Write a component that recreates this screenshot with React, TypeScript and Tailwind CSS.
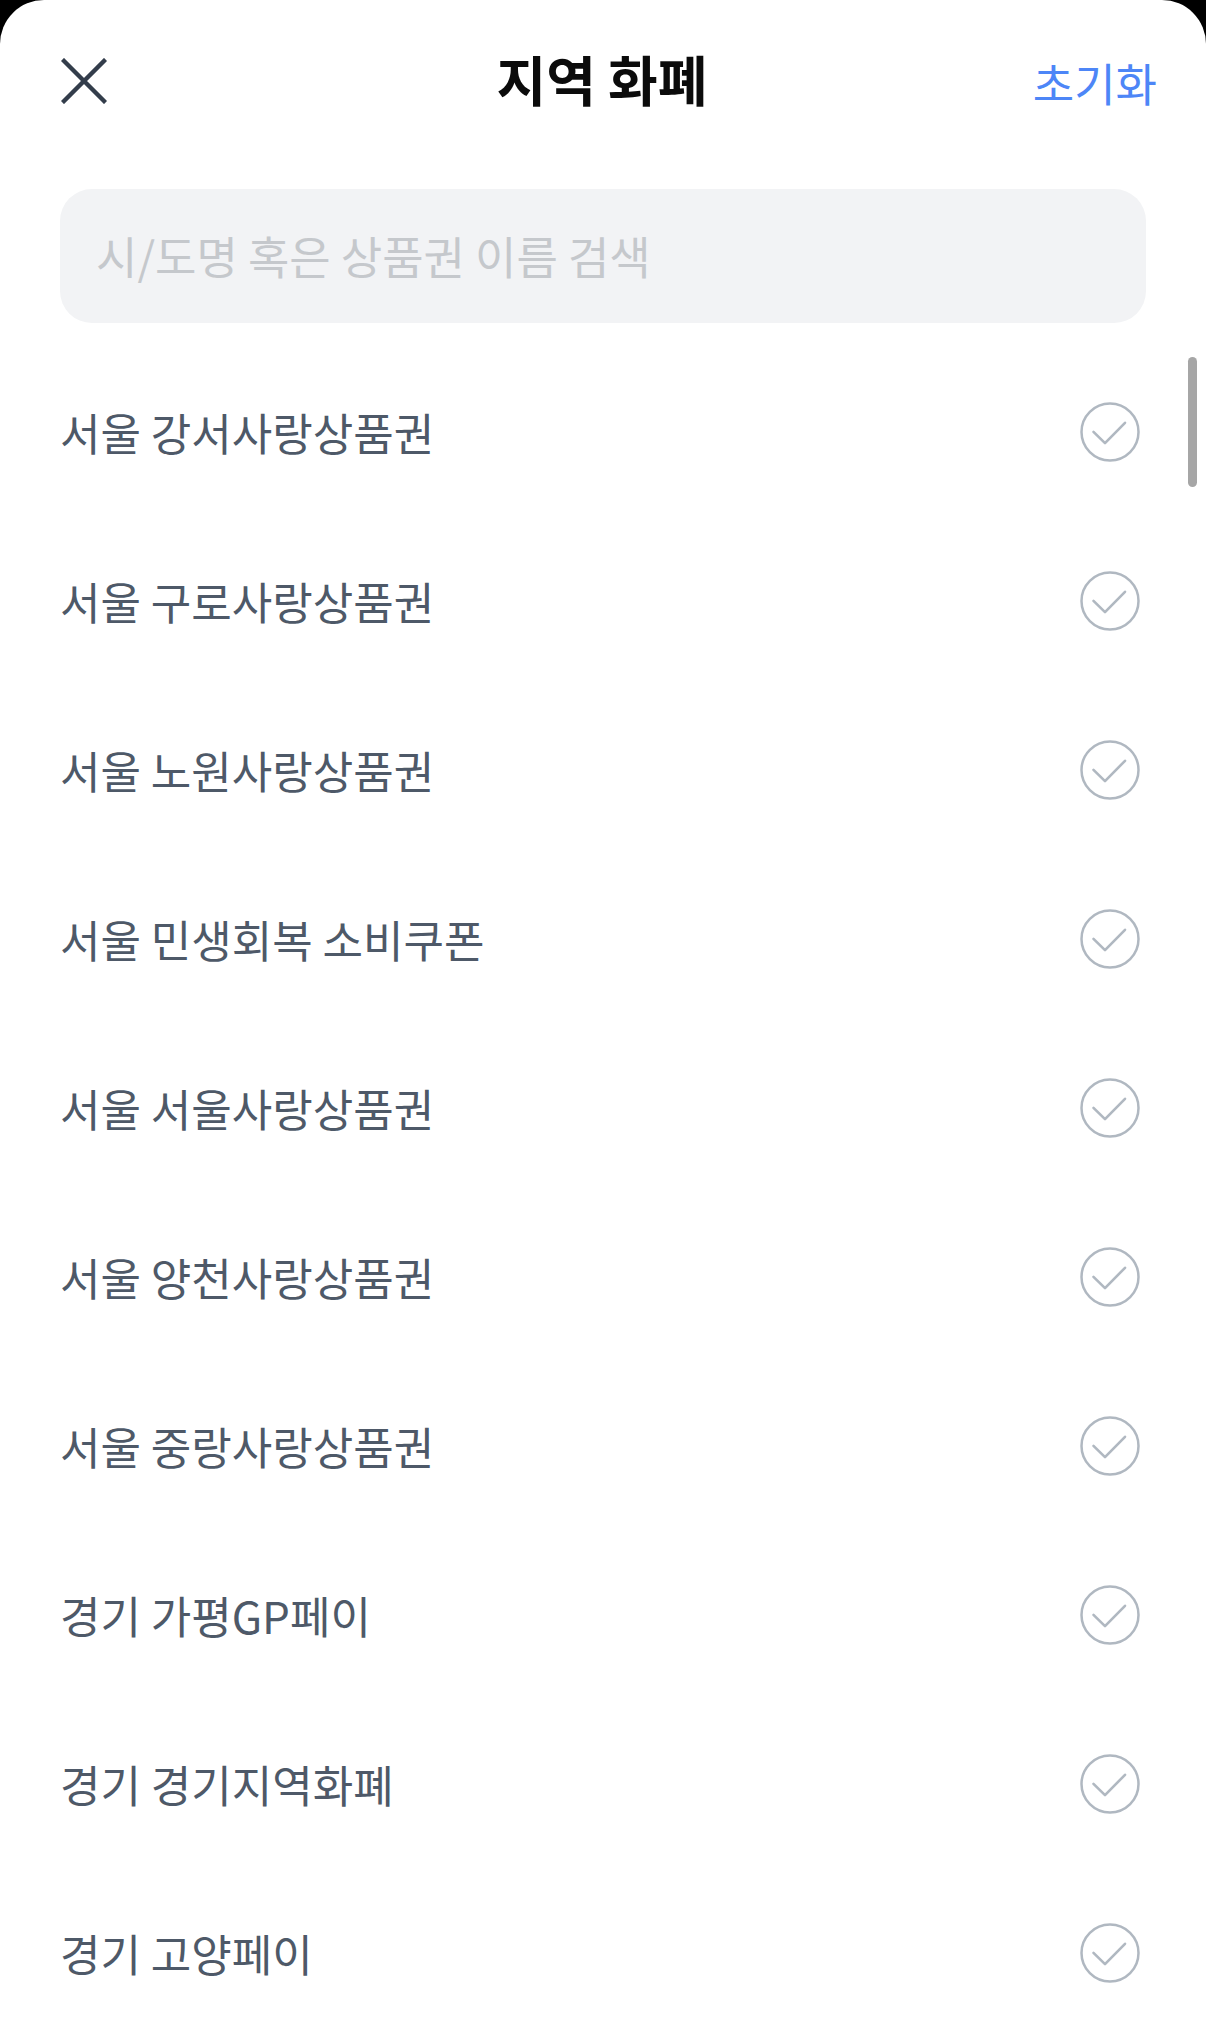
import { useState } from "react";

const regions = [
  "서울 강서사랑상품권",
  "서울 구로사랑상품권",
  "서울 노원사랑상품권",
  "서울 민생회복 소비쿠폰",
  "서울 서울사랑상품권",
  "서울 양천사랑상품권",
  "서울 중랑사랑상품권",
  "경기 가평GP페이",
  "경기 경기지역화폐",
  "경기 고양페이",
];

const CheckCircle = ({ on }: { on: boolean }) => (
  <svg width="60" height="60" viewBox="0 0 60 60" fill="none">
    <circle cx="30" cy="30" r="28.5" stroke={on ? "#3182f6" : "#b0b8c1"} strokeWidth="2.5" fill={on ? "#3182f6" : "none"} />
    <path d="M13.5 29.8L25 41.2L45 20.8" stroke={on ? "#ffffff" : "#b0b8c1"} strokeWidth="2.6" strokeLinecap="round" strokeLinejoin="round" />
  </svg>
);

const App = () => {
  const [query, setQuery] = useState("");
  const [selected, setSelected] = useState<string[]>([]);

  const toggle = (name: string) =>
    setSelected((s) => (s.includes(name) ? s.filter((n) => n !== name) : [...s, name]));

  const list = regions.filter((r) => r.includes(query.trim()));

  return (
    <div className="min-h-screen bg-black font-['Noto_Sans_CJK_KR','Noto_Sans',sans-serif]">
      <div className="relative min-h-screen bg-white rounded-t-[44px]">
        {/* Header */}
        <div className="h-[164px] grid grid-cols-[1fr_auto_1fr] items-center pl-[61px] pr-[49px]">
          <button className="w-[46px] h-[46px] flex items-center justify-start -mt-[2px]" aria-label="닫기">
            <svg width="46" height="46" viewBox="0 0 46 46" fill="none">
              <path d="M3 3L43 43M43 3L3 43" stroke="#333d4b" strokeWidth="4.4" strokeLinecap="square" />
            </svg>
          </button>
          <h1 className="text-[54px] leading-none font-bold text-[#0b0b0b] -mt-[6px] mr-[14px]">지역 화폐</h1>
          <button onClick={() => { setSelected([]); setQuery(""); }} className="justify-self-end text-[45px] leading-none text-[#4d86f7]">
            초기화
          </button>
        </div>

        {/* Search */}
        <div className="mt-[25px] mx-[60px] h-[134px] rounded-[32px] bg-[#f2f3f5] flex items-center px-[36px]">
          <input
            value={query}
            onChange={(e) => setQuery(e.target.value)}
            placeholder="시/도명 혹은 상품권 이름 검색"
            className="w-full bg-transparent outline-none text-[45px] text-[#333d4b] placeholder:text-[#c5c8cc]"
          />
        </div>

        {/* List */}
        <ul className="mt-[24px]">
          {list.map((name) => (
            <li
              key={name}
              onClick={() => toggle(name)}
              className="h-[169px] flex items-center justify-between pl-[60px] pr-[66px] cursor-pointer"
            >
              <span className="text-[44px] text-[#4e5968] leading-none">{name}</span>
              <CheckCircle on={selected.includes(name)} />
            </li>
          ))}
        </ul>

        {/* scroll indicator */}
        <div className="absolute top-[357px] right-[9px] w-[9px] h-[130px] rounded-full bg-[#a6a6a6]" />
      </div>
    </div>
  );
};

export default App;
